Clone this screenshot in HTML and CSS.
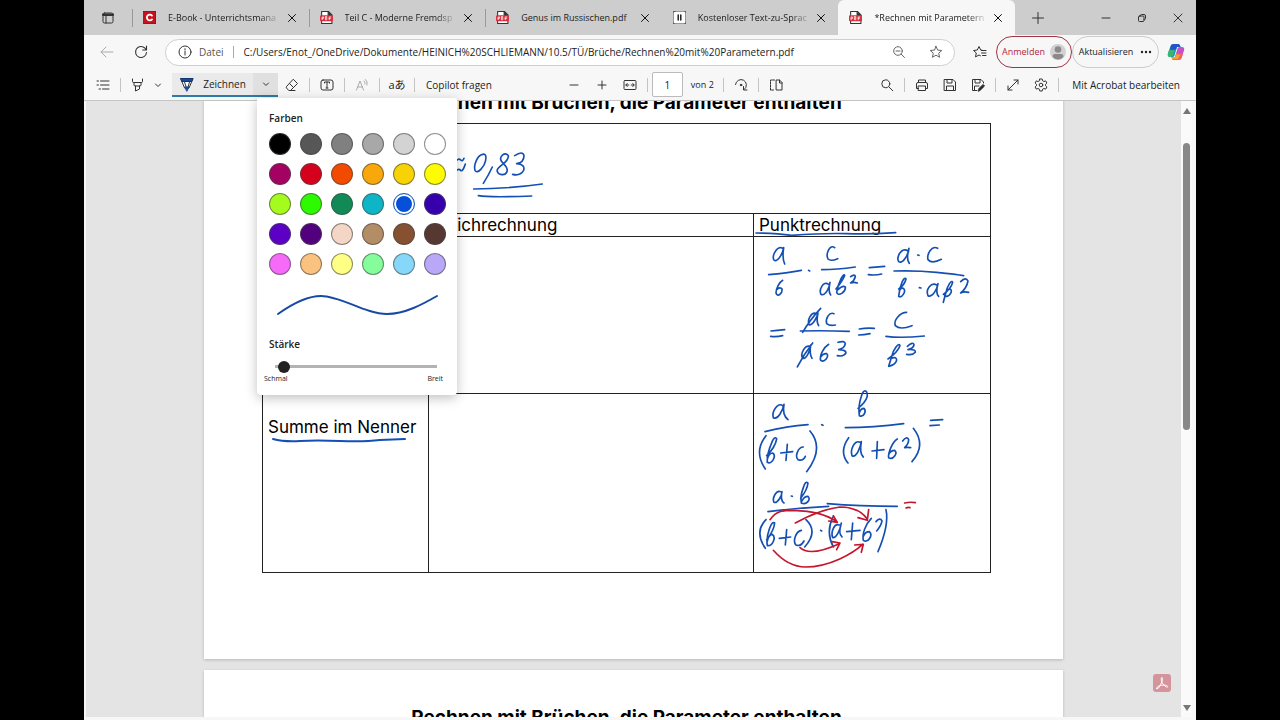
FILE: index.html
```
<!DOCTYPE html>
<html lang="de">
<head>
<meta charset="utf-8">
<meta name="viewport" content="width=device-width, initial-scale=1">
<title>Rechnen mit Parametern.pdf</title>
<link rel="stylesheet" href="styles.css">
</head>
<body>
<svg class="defs" aria-hidden="true">
  <symbol id="close" viewBox="0 0 12 12"><path d="M2.500 2.500l7 7M9.500 2.500l-7 7"/></symbol>
  <symbol id="chevron" viewBox="0 0 12 12"><path d="M3.500 5l2.500 2.500L8.500 5"/></symbol>
  <symbol id="pdf" viewBox="0 0 12 12">
    <path d="M1.500 .5h6.500l3 3v8h-9.500z" fill="#fff" stroke="#333"/>
    <path d="M7.500 .5v3.500h3.500" fill="#333" stroke="#333"/>
    <rect x="0" y="4" width="12" height="5.500" rx="1" fill="#d9303e" stroke="none"/>
    <path d="M2 8V5.500h1.200v1.300H2M5 5.500V8h1.200V5.500zM8.500 8V5.500H10M8.500 6.800h1.200" stroke="#fff" stroke-width=".7"/>
  </symbol>
</svg>

<div class="window">
  <header class="tabstrip">
    <button class="tab-actions" aria-label="Menü für Tabaktionen">
      <svg class="icon12" viewBox="0 0 12 12"><rect x="1" y="1" width="10" height="10" rx="1.500"/><path d="M1 2.700h10" stroke-width="2.500"/><path d="M4 3v8"/></svg>
    </button>
    <nav class="tabs" aria-label="Tabs">
      <div class="tab">
        <svg class="favicon" viewBox="0 0 13 13"><rect width="13" height="13" fill="#c4121f"/><path d="M9 4.600A2.900 2.900 0 1 0 9 8.400" stroke="#fff" stroke-width="1.900"/></svg>
        <a class="tab-title tab-fade" href="#t1">E-Book - Unterrichtsmana</a>
        <button class="tab-close" aria-label="Schließen"><svg class="icon12"><use href="#close"/></svg></button>
      </div>
      <div class="tab">
        <svg class="favicon"><use href="#pdf"/></svg>
        <a class="tab-title tab-fade" href="#t2">Teil C - Moderne Fremdsp</a>
        <button class="tab-close" aria-label="Schließen"><svg class="icon12"><use href="#close"/></svg></button>
      </div>
      <div class="tab">
        <svg class="favicon"><use href="#pdf"/></svg>
        <a class="tab-title" href="#t3">Genus im Russischen.pdf</a>
        <button class="tab-close" aria-label="Schließen"><svg class="icon12"><use href="#close"/></svg></button>
      </div>
      <div class="tab tab-plain">
        <svg class="favicon" viewBox="0 0 13 13"><rect width="13" height="13" rx="2" fill="#fff"/><path d="M5.200 4v5M7.800 4v5" stroke="#111" stroke-width="1.400"/></svg>
        <a class="tab-title tab-fade" href="#t4">Kostenloser Text-zu-Sprac</a>
        <button class="tab-close" aria-label="Schließen"><svg class="icon12"><use href="#close"/></svg></button>
      </div>
      <div class="tab tab-active">
        <svg class="favicon"><use href="#pdf"/></svg>
        <a class="tab-title tab-fade" href="#t5">*Rechnen mit Parametern</a>
        <button class="tab-close" aria-label="Schließen"><svg class="icon12"><use href="#close"/></svg></button>
      </div>
    </nav>
    <button class="new-tab" aria-label="Neuer Tab"><svg class="icon12" viewBox="0 0 12 12"><path d="M6 .5v11M.5 6h11"/></svg></button>
    <div class="window-controls">
      <button aria-label="Minimieren"><svg class="icon12" viewBox="0 0 12 12"><path d="M2 6h8"/></svg></button>
      <button aria-label="Wiederherstellen"><svg class="icon12" viewBox="0 0 12 12"><rect x="2.500" y="4" width="5.500" height="5.500" rx="1"/><path d="M4.500 4V3.500q0-1 1-1H8q1.500 0 1.500 1.500v2.500q0 1-1 1H8"/></svg></button>
      <button aria-label="Schließen"><svg class="icon12" viewBox="0 0 12 12"><path d="M2 2l8 8M10 2l-8 8"/></svg></button>
    </div>
  </header>

  <div class="navbar">
    <button class="nav-button nav-off" aria-label="Zurück"><svg class="icon" viewBox="0 0 16 16"><path d="M14 8H2M7 3L2 8l5 5"/></svg></button>
    <button class="nav-button" aria-label="Aktualisieren"><svg class="icon" viewBox="0 0 16 16"><path d="M13.500 8.500A5.500 5.500 0 1 1 12 4.200L13.500 6M13.500 2v4H9.700" stroke-width="1.100"/></svg></button>
    <div class="address">
      <svg class="icon" viewBox="0 0 16 16"><circle cx="8" cy="8" r="6"/><path d="M8 7v4M8 4.700v1"/></svg>
      <span class="scheme">Datei</span>
      <input class="url" type="text" aria-label="Adresse" value="C:/Users/Enot_/OneDrive/Dokumente/HEINICH%20SCHLIEMANN/10.5/TÜ/Brüche/Rechnen%20mit%20Parametern.pdf">
      <button class="address-button" aria-label="Zoom"><svg class="icon" viewBox="0 0 16 16"><circle cx="7" cy="7" r="4.300"/><path d="M10.200 10.200l3.300 3.300M5 7h4"/></svg></button>
      <button class="address-button" aria-label="Favorit"><svg class="icon" viewBox="0 0 16 16"><path d="M8 2.300l1.700 3.800 4.100.4-3.100 2.700.9 4.100L8 11.200l-3.600 2.100.9-4.100-3.100-2.700 4.100-.4z"/></svg></button>
    </div>
    <button class="favorites" aria-label="Favoriten"><svg class="icon" viewBox="0 0 16 16"><path d="M10 6.200L8.700 6 7 2.500 5.300 6l-3.800.5L4.300 9l-.8 3.900L7 11l1.500.8M9.500 6.500H14M9.500 9H14M10.500 11.500H14"/></svg></button>
    <button class="pill sign-in">Anmelden
      <svg class="avatar" viewBox="0 0 16 16"><circle cx="8" cy="8" r="8" fill="#d2d0d0"/><circle cx="8" cy="5.500" r="3.300" fill="#8c8989"/><path d="M2.500 12.500q0-2.500 2.500-2.500h6q2.500 0 2.500 2.500Q11.500 15.500 8 15.500t-5.500-3z" fill="#8c8989"/></svg>
    </button>
    <button class="pill update">Aktualisieren <svg class="dots" viewBox="0 0 12 4"><circle cx="2" cy="2" r="1.200"/><circle cx="6" cy="2" r="1.200"/><circle cx="10" cy="2" r="1.200"/></svg></button>
    <button class="copilot" aria-label="Copilot">
      <svg viewBox="0 0 18 18">
        <path d="M6.500 1H11q1.600 0 2 1.500L13.500 4H10L7.500 12.500Q7 14 5.500 14H3Q.5 14 .8 11L3.500 3Q4.200 1 6.500 1z" fill="#1596c9"/>
        <path d="M6.500 1H11q1.600 0 2 1.500L13.500 4H10L9 6.500 3 7 3.800 3Q4.500 1 6.500 1z" fill="#2455c4"/>
        <path d="M2 7h5.500L6 12.500Q5.500 14 4 14H3Q.5 14 .8 11z" fill="#37b66e"/>
        <path d="M11.500 17H7q-1.600 0-2-1.500L4.500 14H8l2.500-8.500Q11 4 12.500 4H15q2.500 0 2.200 3l-2.700 8q-.7 2-3 2z" fill="#c74fc9"/>
        <path d="M11.500 17H7q-1.600 0-2-1.500L4.500 14H8l1.200-3.500H16l-1.500 4.500q-.7 2-3 2z" fill="#f0675a"/>
        <path d="M4.500 14H8l.8-2.500H13L11 16H5.300z" fill="#f6a32e"/>
      </svg>
    </button>
  </div>

  <div class="toolbar">
    <div class="group">
      <button class="tool" aria-label="Inhalt"><svg class="icon" viewBox="0 0 16 16"><path d="M5.500 4h8.500M5.500 8h8.500M7.500 12H14M2 4h1.500M2 8h1.500M4 12h1.500"/></svg></button>
      <span class="sep"></span>
      <button class="tool" aria-label="Hervorheben"><svg class="icon" viewBox="0 0 16 16"><path d="M2.500 2v2.500q0 1 1 1h8q1 0 1-1V2M4 5.500V8q0 1 1 1h5q1 0 1-1V5.500M5.500 9v5L9.500 12V9"/></svg></button>
      <button class="tool-narrow" aria-label="Hervorhebungsfarbe"><svg class="icon12"><use href="#chevron"/></svg></button>
      <div class="draw">
        <button class="draw-main"><svg class="icon" viewBox="0 0 16 16"><path d="M2 2.500h12L10 12H6z" fill="#fff"/><path d="M2 2.500h12l-1.200 3H3.200z" fill="#174a9c" stroke="#12356e"/><path d="M5.500 6l2 6M10.500 6l-1.500 5"/><path d="M6 11h4l-2 4z" fill="#174a9c" stroke="#174a9c"/></svg>Zeichnen</button>
        <button class="draw-more" aria-label="Zeichenoptionen"><svg class="icon12"><use href="#chevron"/></svg></button>
        <form class="palette">
          <h2 class="palette-title">Farben</h2>
          <div class="swatches">
            <input type="radio" name="c" class="swatch black" aria-label="Schwarz">
            <input type="radio" name="c" class="swatch gray1" aria-label="Dunkelgrau">
            <input type="radio" name="c" class="swatch gray2" aria-label="Grau">
            <input type="radio" name="c" class="swatch gray3" aria-label="Mittelgrau">
            <input type="radio" name="c" class="swatch gray4" aria-label="Hellgrau">
            <input type="radio" name="c" class="swatch white" aria-label="Weiß">
            <input type="radio" name="c" class="swatch magenta" aria-label="Magenta">
            <input type="radio" name="c" class="swatch red" aria-label="Rot">
            <input type="radio" name="c" class="swatch orange" aria-label="Orange">
            <input type="radio" name="c" class="swatch amber" aria-label="Bernstein">
            <input type="radio" name="c" class="swatch gold" aria-label="Gold">
            <input type="radio" name="c" class="swatch yellow" aria-label="Gelb">
            <input type="radio" name="c" class="swatch lime" aria-label="Limette">
            <input type="radio" name="c" class="swatch green" aria-label="Grün">
            <input type="radio" name="c" class="swatch forest" aria-label="Dunkelgrün">
            <input type="radio" name="c" class="swatch teal" aria-label="Türkis">
            <input type="radio" name="c" class="swatch blue" aria-label="Blau" checked>
            <input type="radio" name="c" class="swatch indigo" aria-label="Indigo">
            <input type="radio" name="c" class="swatch violet" aria-label="Violett">
            <input type="radio" name="c" class="swatch purple" aria-label="Lila">
            <input type="radio" name="c" class="swatch skin" aria-label="Beige">
            <input type="radio" name="c" class="swatch tan" aria-label="Hellbraun">
            <input type="radio" name="c" class="swatch brown" aria-label="Braun">
            <input type="radio" name="c" class="swatch umber" aria-label="Dunkelbraun">
            <input type="radio" name="c" class="swatch pink" aria-label="Rosa">
            <input type="radio" name="c" class="swatch peach" aria-label="Pfirsich">
            <input type="radio" name="c" class="swatch cream" aria-label="Hellgelb">
            <input type="radio" name="c" class="swatch mint" aria-label="Mint">
            <input type="radio" name="c" class="swatch sky" aria-label="Himmelblau">
            <input type="radio" name="c" class="swatch lavender" aria-label="Lavendel">
          </div>
          <svg class="preview" viewBox="0 0 176 34"><path d="M9 25C30 10 44 7 52 7C72 7 96 25 118 25C136 25 154 15 168 7"/></svg>
          <label class="palette-title" for="width">Stärke</label>
          <input class="slider" id="width" type="range" min="0" max="100" value="2">
          <div class="slider-labels"><span>Schmal</span><span>Breit</span></div>
        </form>
      </div>
      <button class="tool" aria-label="Radieren"><svg class="icon" viewBox="0 0 16 16"><path d="M9.500 2.500l4 4-7 7H4.800L2.500 11q-.7-.8 0-1.500zM5.500 6.500l4 4M6.500 13.500H11"/></svg></button>
      <span class="sep"></span>
      <button class="tool" aria-label="Text hinzufügen"><svg class="icon" viewBox="0 0 16 16"><rect x="2" y="3" width="12" height="10" rx="2"/><path d="M5.500 6V5h5v1M8 5v6M7 11h2"/></svg></button>
      <span class="sep"></span>
      <button class="tool nav-off" aria-label="Laut vorlesen"><svg class="icon" viewBox="0 0 16 16"><path d="M2.500 13L6 4l3.500 9M3.700 10h4.600M10 4q1.500 1 1 3M11.500 2.500q2.500 2 1.500 5.500"/></svg></button>
      <span class="sep"></span>
      <button class="tool translate" aria-label="Übersetzen">aあ</button>
      <span class="sep"></span>
      <button class="tool-text">Copilot fragen</button>
    </div>
    <div class="group group-page">
      <button class="tool" aria-label="Verkleinern"><svg class="icon" viewBox="0 0 16 16"><path d="M4 8h8"/></svg></button>
      <button class="tool" aria-label="Vergrößern"><svg class="icon" viewBox="0 0 16 16"><path d="M4 8h8M8 4v8"/></svg></button>
      <button class="tool" aria-label="An Breite anpassen"><svg class="icon" viewBox="0 0 16 16"><rect x="2" y="3.500" width="12" height="9" rx="1"/><path d="M4 8h2.800M9.200 8H12M5.200 6.500L3.800 8l1.400 1.500M10.800 6.500L12.200 8l-1.400 1.500"/></svg></button>
      <span class="sep"></span>
      <input class="page-number" type="text" id="page" value="1">
      <label class="page-count" for="page">von 2</label>
      <span class="sep"></span>
      <button class="tool" aria-label="Drehen"><svg class="icon" viewBox="0 0 16 16"><path d="M2.500 7.500A5.500 5.500 0 1 1 11.500 12.300M10.500 9.500v3.500H14"/><circle cx="8" cy="8" r=".8" fill="#333"/></svg></button>
      <span class="sep"></span>
      <button class="tool" aria-label="Seitenansicht"><svg class="icon" viewBox="0 0 16 16"><path d="M8.500 3h3l2.500 2.500V13H8.500zM11.500 3v3H14"/><path d="M6.500 3H2.500v10h4" stroke-dasharray="2 1"/></svg></button>
    </div>
    <div class="group group-end">
      <button class="tool" aria-label="Suchen"><svg class="icon" viewBox="0 0 16 16"><circle cx="6.800" cy="6.800" r="4"/><path d="M9.800 9.800l4 4"/></svg></button>
      <span class="sep"></span>
      <button class="tool" aria-label="Drucken"><svg class="icon" viewBox="0 0 16 16"><path d="M4.500 5.500V3h7v2.500M4.500 11.500H2.500V7q0-1.500 1.500-1.500h8q1.500 0 1.500 1.500v4.500h-2"/><rect x="4.500" y="9" width="7" height="4.500"/></svg></button>
      <button class="tool" aria-label="Speichern"><svg class="icon" viewBox="0 0 16 16"><path d="M2.500 2.500h8.500l2.500 2.500v8.500h-11zM5 2.500V6h5V2.500M4.500 13.500V9h7v4.500"/></svg></button>
      <button class="tool" aria-label="Speichern unter"><svg class="icon" viewBox="0 0 16 16"><path d="M13.500 6V5L11 2.500H2.500v11H7M5 2.500V6h5V2.500M4.500 13.500V9H9"/><path d="M8.500 14l.5-2.500 4-4 1.500 1.500-4 4z" fill="#222"/></svg></button>
      <span class="sep"></span>
      <button class="tool" aria-label="Vollbild"><svg class="icon" viewBox="0 0 16 16"><path d="M3 13L13 3M9 3h4v4M3 9v4h4"/></svg></button>
      <button class="tool" aria-label="Einstellungen"><svg class="icon" viewBox="0 0 16 16"><path d="M6.800 2h2.400l.4 1.800 1.300.7 1.800-.6 1.200 2.100-1.400 1.300v1.400l1.400 1.300-1.200 2.100-1.800-.6-1.300.7-.4 1.800H6.800l-.4-1.800-1.300-.7-1.800.6L2.100 10l1.400-1.300V7.300L2.100 6l1.200-2.100 1.800.6 1.300-.7z"/><circle cx="8" cy="8" r="1.800"/></svg></button>
      <span class="sep"></span>
      <button class="tool-text tool-last">Mit Acrobat bearbeiten</button>
    </div>
  </div>

  <div class="viewer">
    <main class="pages">
      <article class="page">
        <h1 class="page-heading">Rechnen mit Brüchen, die Parameter enthalten</h1>
        <table class="sheet">
          <colgroup><col class="col-a"><col class="col-b"><col class="col-c"></colgroup>
          <tr class="row-intro"><td colspan="3"></td></tr>
          <tr class="row-head"><th></th><th scope="col">Strichrechnung</th><th scope="col">Punktrechnung</th></tr>
          <tr class="row-product"><td></td><td></td><td></td></tr>
          <tr class="row-sum"><th scope="row">Summe im Nenner</th><td></td><td></td></tr>
        </table>
        <svg class="ink" viewBox="204 100 859 559" aria-hidden="true">
          <g transform="translate(440 95) scale(.3333)">
            <path d="M48 198q8-9 14-3t10-5M48 228q8-8 14-2t14-19"/>
            <path d="M128 178C112 180 100 212 105 226C112 240 134 214 137 196C140 182 136 176 128 178M157 216Q146 240 130 265"/>
            <path d="M205 182C196 168 176 184 184 198C190 208 206 216 201 230C194 246 168 238 172 224C178 210 208 202 205 182M224 182Q248 166 252 182Q252 202 230 206Q256 208 251 226Q240 244 218 238"/>
            <path d="M101 282Q200 282 307 267M115 302Q150 308 275 303"/>
          </g>
          <g transform="translate(750 205) scale(.3333)">
            <path d="M18 84Q80 84 125 91Q220 84 290 86T437 83"/>
            <path d="M101 132C84 116 66 150 71 164C78 176 98 150 101 128Q96 160 104 177M56 209Q110 204 154 196M98 226C88 232 78 250 78 264C82 278 98 266 96 252Q90 244 80 254M176 196l3 2"/>
            <path d="M254 128C240 116 226 146 234 162Q242 170 263 161M215 194Q260 194 316 186M236 238C220 226 206 254 213 268C226 276 240 244 240 232Q234 260 242 270M258 252Q276 230 284 212C282 200 266 230 260 262C264 276 288 262 286 246Q278 240 264 254M302 215Q314 206 316 214Q314 226 302 234Q312 230 322 234"/>
            <path d="M358 188Q380 186 404 184M355 209Q376 212 395 207"/>
            <path d="M474 138C456 124 438 156 446 170C458 178 476 148 477 130Q468 164 478 175M503 150l4 1M563 130C546 120 530 146 534 164Q546 178 574 163M432 198Q500 196 560 202T641 212"/>
            <path d="M446 252Q464 240 468 222C462 212 450 240 446 274C456 280 470 258 460 250Q452 248 448 258M508 248l5 1M560 240C544 230 526 254 534 272C548 280 562 250 564 236Q556 264 566 274M580 268Q604 250 608 232C604 222 592 244 588 262L580 292M586 274C600 276 610 256 600 252Q590 254 584 272M632 230Q648 214 654 228Q650 250 632 264Q642 258 656 262"/>
            <path d="M63 378Q80 376 104 374M62 394Q80 396 98 392"/>
            <path d="M200 326C184 318 170 346 178 360C190 360 202 334 204 324Q198 350 206 362M212 310Q180 344 158 382M252 326C238 320 226 340 230 356Q240 364 256 360M151 378Q220 376 298 379"/>
            <path d="M180 424C164 420 150 446 158 460C170 464 182 432 182 420Q178 448 186 460M188 414Q160 450 142 486M236 418C220 428 208 452 212 466C224 474 238 454 230 446Q220 444 212 456M264 412Q284 406 286 416Q284 430 266 434Q288 434 288 444Q282 456 262 452"/>
            <path d="M328 372Q350 368 373 370M326 390Q342 390 360 386M470 322C450 322 430 346 436 362Q450 376 486 362M408 394Q450 400 523 393"/>
            <path d="M414 462Q444 440 450 422C446 410 430 434 426 452L416 484Q436 480 440 466Q440 454 424 460M472 424Q490 408 492 420Q490 430 474 434Q498 432 496 442Q488 452 470 448"/>
          </g>
          <g transform="translate(750 385) scale(.3333)">
            <path d="M98 62C84 50 64 80 70 98C84 106 98 76 102 58Q96 90 114 104M45 140Q110 124 174 119M215 119l4 2"/>
            <path d="M324 70Q346 54 352 34C352 12 340 12 334 34Q324 64 328 92C342 98 350 78 342 70Q332 70 328 84M286 128Q370 128 461 116M542 106L578 104M540 122L568 120"/>
            <path d="M48 152Q10 200 46 252M50 212Q76 186 80 162Q74 150 64 176Q50 210 52 232C66 240 80 212 68 204Q58 204 52 222M112 178L108 226M92 204L128 200M160 186C144 186 134 214 144 224Q158 230 166 214M180 138Q224 190 170 260"/>
            <path d="M296 158Q266 200 294 234M330 172C314 162 300 196 306 212C320 220 332 184 334 170Q328 206 340 216M382 170L380 220M366 198L402 194M442 162C426 172 414 204 416 218C430 226 444 204 434 196Q422 196 416 208M458 168Q470 152 476 164Q476 176 464 188Q472 186 482 188M490 130Q530 180 486 230"/>
            <path d="M92 320C78 314 66 340 72 352C84 356 96 330 96 320Q90 346 102 354M124 333l3 1M152 340Q172 314 174 294Q166 286 160 308Q150 334 154 354C170 362 184 342 174 334Q162 334 156 348"/>
            <path d="M54 380Q150 368 236 364M232 356Q330 364 442 364"/>
            <path d="M48 404Q12 440 46 490M50 464Q72 436 74 414Q66 408 58 432Q48 460 52 482C68 484 80 456 66 448Q56 450 52 468M110 434L106 480M88 460L122 456M154 436C136 440 128 470 138 480Q152 486 162 468M168 404Q206 440 164 486M212 436l3 2"/>
            <path d="M250 394Q226 440 250 486M268 420C252 414 242 442 248 458C260 460 272 430 274 414Q264 446 276 456M308 414L304 464M290 440L330 436M364 400C346 418 336 448 340 466C354 476 370 450 358 440Q346 440 340 454M378 410Q390 396 396 408Q394 422 380 438M408 374Q418 420 384 500"/>
            <g class="ink-red">
              <path d="M60 404C80 376 100 376 130 376C190 378 230 388 260 410M250 392L262 412L236 408"/>
              <path d="M136 414C180 390 220 372 270 366C310 366 336 380 352 402M356 374L352 406L324 398"/>
              <path d="M150 488Q180 516 268 476M246 470L270 474L260 494"/>
              <path d="M70 496C100 530 130 546 166 546C240 546 310 504 338 478M314 480L340 478L334 502"/>
              <path d="M464 354Q480 350 496 353M468 369Q474 366 480 368"/>
            </g>
          </g>
          <path d="M273 439Q284 442 300 441T340 441T380 440L405 439"/>
        </svg>
      </article>
      <article class="page">
        <h1 class="page-heading">Rechnen mit Brüchen, die Parameter enthalten</h1>
      </article>
    </main>
    <button class="acrobat" aria-label="In Acrobat öffnen"><svg viewBox="0 0 18 18"><path d="M3.500 14.500C3 12.500 9 10 13.500 11.500C16 12.500 14.500 14 12.500 12.500C9.500 10.500 8 7 8.200 4.500C8.500 2.500 10 3.500 9.500 5.500C9 8.500 6.500 13 5 14.500Q4 15.300 3.500 14.500z"/></svg></button>
    <div class="scrollbar">
      <svg class="arrow" viewBox="0 0 8 6"><path d="M4 0l4 6H0z"/></svg>
      <div class="track"><div class="thumb"></div></div>
      <svg class="arrow" viewBox="0 0 8 6"><path d="M4 6l4-6H0z"/></svg>
    </div>
  </div>
</div>
</body>
</html>
```
FILE: styles.css
```
* { box-sizing: border-box; }

body {
  margin: 0;
  background: #000;
  color: #222;
  font-family: "Open Sans", "Noto Sans", sans-serif;
  font-size: 10px;
  line-height: 16px;
}

button {
  display: flex;
  align-items: center;
  justify-content: center;
  flex: none;
  margin: 0;
  padding: 0;
  border: 0;
  background: none;
  color: inherit;
  font: inherit;
}

svg {
  fill: none;
  stroke: #333;
  stroke-width: 1;
  stroke-linecap: round;
  stroke-linejoin: round;
}

.defs { position: absolute; width: 0; height: 0; }
.icon { flex: none; width: 16px; height: 16px; }
.icon12 { flex: none; width: 12px; height: 12px; }

.window {
  display: flex;
  flex-direction: column;
  height: 100vh;
  margin: 0 84px;
  padding-bottom: 3px;
  background: #f7f7f7;
}

/* Tab strip */
.tabstrip {
  display: flex;
  flex: none;
  height: 35px;
  background: #cdcdcd;
}
.tab-actions { width: 48px; }
.tabs { display: flex; flex: 0 1 883px; min-width: 0; }
.tab {
  display: flex;
  align-items: center;
  flex: 1 1 0;
  min-width: 0;
  padding: 0 11px 0 11px;
  background: linear-gradient(#999, #999) left center / 1px 18px no-repeat;
}
.tab-plain { background: none; }
.tab-active { background: #f7f7f7; border-radius: 6px 6px 0 0; }
.favicon { flex: none; width: 13px; height: 13px; margin-right: 12px; }
.tab-title {
  flex: none;
  color: #1b1b1b;
  font-size: 9px;
  text-decoration: none;
  white-space: nowrap;
}
.tab-fade {
  -webkit-mask-image: linear-gradient(90deg, #000 85%, rgba(0, 0, 0, .2));
  mask-image: linear-gradient(90deg, #000 85%, rgba(0, 0, 0, .2));
}
.tab-close { width: 12px; margin-left: auto; }
.tab-close svg { stroke: #111; }
.new-tab { width: 46px; }
.window-controls { display: flex; margin-left: auto; }
.window-controls button { width: 36px; }

/* Address row */
.navbar {
  display: flex;
  align-items: center;
  flex: none;
  height: 34px;
  padding: 0 6px;
}
.nav-button { width: 34px; height: 28px; }
.nav-off svg { stroke: #aaa; }
.address {
  display: flex;
  align-items: center;
  flex: 1;
  min-width: 0;
  height: 27px;
  margin-left: 7px;
  padding: 0 10px 0 11px;
  border: 1px solid #cfcfcf;
  border-radius: 14px;
  background: #fff;
}
.scheme {
  margin-left: 6px;
  padding-right: 9px;
  border-right: 1px solid #aaa;
  color: #555;
  line-height: 12px;
}
.url {
  flex: 1;
  min-width: 0;
  padding: 0 0 0 10px;
  border: 0;
  background: none;
  color: #222;
  font: inherit;
}
.address-button { width: 16px; margin-left: 21px; }
.address-button svg { stroke: #666; }
.favorites { width: 41px; padding-left: 8px; }
.pill {
  gap: 5px;
  height: 32px;
  border: 1px solid #ccc;
  border-radius: 16px;
  font-size: 9px;
}
.sign-in { width: 76px; border-color: #a03345; color: #b3283c; }
.avatar { width: 16px; height: 16px; stroke: none; }
.update { width: 87px; gap: 7px; }
.dots { width: 12px; height: 4px; fill: #222; stroke: none; }
.copilot { width: 28px; margin-left: 3px; }
.copilot svg { width: 18px; height: 18px; stroke: none; }

/* PDF toolbar */
.toolbar {
  display: flex;
  flex: none;
  height: 32px;
  padding: 0 6px 0 5px;
  border-bottom: 1px solid #c4c4c4;
}
.group { display: flex; align-items: center; flex: none; }
.group-page { margin-left: 60px; }
.group-end { margin-left: auto; }
.tool { width: 28px; height: 28px; }
.tool-narrow { width: 12px; height: 28px; margin-right: 8px; }
.tool-text { padding: 0 8px; white-space: nowrap; }
.tool-last { padding: 0 10px; }
.translate { font-family: "Open Sans", "Noto Sans CJK JP", sans-serif; font-size: 11px; }
.sep { width: 1px; height: 14px; margin: 0 3px; background: #c4c4c4; }
.page-number {
  width: 31px;
  height: 25px;
  margin: 0 0 0 1px;
  padding: 0;
  border: 1px solid #bbb;
  border-radius: 2px;
  background: #fff;
  color: #222;
  font: inherit;
  text-align: center;
}
.page-count { padding: 0 6px 0 8px; font-size: 9px; white-space: nowrap; }

.draw {
  position: relative;
  display: flex;
  height: 24px;
  border-bottom: 2px solid #2a7ba6;
  background: #eaeaea;
}
.draw-main { width: 81px; gap: 8px; }
.draw-more { width: 25px; background: #e0e0e0; }

/* Pen options */
.palette {
  position: absolute;
  z-index: 2;
  top: 25px;
  left: 85px;
  display: flex;
  flex-direction: column;
  width: 200px;
  padding: 12px 12px 11px;
  border-radius: 2px 2px 4px 4px;
  background: #fff;
  box-shadow: 0 3px 12px rgba(0, 0, 0, .25);
}
.palette-title { margin: 0; font-size: 10px; font-weight: 600; line-height: 16px; }
.swatches {
  display: grid;
  grid-template-columns: repeat(6, 22px);
  gap: 8px 9px;
  margin-top: 7px;
}
.swatch {
  width: 22px;
  height: 22px;
  margin: 0;
  border: 1px solid rgba(70, 70, 70, .6);
  border-radius: 50%;
  appearance: none;
}
.swatch:checked {
  border-color: #1256bd;
  box-shadow: inset 0 0 0 2px #fff;
  background-clip: padding-box;
}
.black { background-color: #000; }
.gray1 { background-color: #575757; }
.gray2 { background-color: #808080; }
.gray3 { background-color: #a8a8a8; }
.gray4 { background-color: #d3d3d3; }
.white { background-color: #fff; }
.magenta { background-color: #a30262; }
.red { background-color: #d5001c; }
.orange { background-color: #f24b00; }
.amber { background-color: #f8a80b; }
.gold { background-color: #f6d206; }
.yellow { background-color: #fffb00; }
.lime { background-color: #a5fb1d; }
.green { background-color: #2df900; }
.forest { background-color: #118a56; }
.teal { background-color: #0eb5c7; }
.blue { background-color: #0450d9; }
.indigo { background-color: #3700ad; }
.violet { background-color: #5b00c4; }
.purple { background-color: #52007d; }
.skin { background-color: #f3d6c5; }
.tan { background-color: #b28d66; }
.brown { background-color: #855130; }
.umber { background-color: #573732; }
.pink { background-color: #f56bf7; }
.peach { background-color: #f9c27e; }
.cream { background-color: #feff84; }
.mint { background-color: #85fd9b; }
.sky { background-color: #86d7f9; }
.lavender { background-color: #b9a8f8; }
.preview { height: 34px; margin: 14px 0 13px; stroke: #174aa5; stroke-width: 2; }
.slider {
  width: auto;
  height: 14px;
  margin: 8px 8px 0 6px;
  background: linear-gradient(#b3b3b3, #b3b3b3) center / 100% 3px no-repeat;
  appearance: none;
}
.slider::-webkit-slider-thumb {
  width: 12px;
  height: 12px;
  border-radius: 50%;
  background: #222;
  appearance: none;
}
.slider-labels {
  display: flex;
  justify-content: space-between;
  margin: 0 2px 0 -5px;
  font-size: 7px;
  line-height: 10px;
}

/* Document */
.viewer {
  position: relative;
  display: flex;
  flex: 1;
  min-height: 0;
  margin: 0 4px 0 2px;
  overflow: hidden;
  background: #e4e4e4;
}
.pages {
  display: flex;
  flex-direction: column;
  align-items: center;
  flex: 1;
  gap: 11px;
  min-width: 0;
  margin-top: -46px;
}
.page {
  position: relative;
  flex: none;
  width: 100%;
  max-width: 859px;
  min-height: 604px;
  padding: 36px 72px 0 58px;
  background: #fff;
  box-shadow: 0 1px 3px rgba(0, 0, 0, .2);
  color: #000;
  font-family: Inter, sans-serif;
}
.page-heading {
  margin: 0 0 8px;
  font-size: 19px;
  font-weight: 700;
  line-height: 24px;
  text-align: center;
}
.sheet {
  width: 100%;
  border-collapse: collapse;
  table-layout: fixed;
  font-size: 17px;
  line-height: 20px;
}
.sheet td, .sheet th {
  padding: 0 5px;
  border: 1px solid #222;
  font-weight: 400;
  text-align: left;
  vertical-align: top;
  white-space: nowrap;
}
.col-a { width: 166px; }
.col-c { width: 237px; }
.row-intro { height: 90px; }
.row-head { height: 23px; }
.row-product { height: 157px; }
.row-sum { height: 179px; }
.sheet .row-head th { padding-top: 1px; }
.sheet .row-sum th { padding-top: 23px; }
.ink {
  position: absolute;
  bottom: 0;
  left: 0;
  width: 859px;
  height: 559px;
  stroke: #1450b4;
  stroke-width: 2;
}
.ink g { stroke-width: 5; }
.ink .ink-red { stroke: #c4162c; }
.acrobat {
  position: absolute;
  right: 21px;
  bottom: 25px;
  width: 18px;
  height: 18px;
  border-radius: 3px;
  background: #d4949b;
}
.acrobat svg { width: 18px; height: 18px; stroke: #fff; }

.scrollbar {
  display: flex;
  flex-direction: column;
  align-items: center;
  flex: none;
  width: 11px;
  padding: 7px 0 6px;
  background: #fafafa;
}
.arrow { flex: none; width: 8px; height: 6px; fill: #777; stroke: none; }
.track { flex: 1; width: 7px; padding-top: 29px; }
.thumb { height: 51%; border-radius: 4px; background: #888; }
```
